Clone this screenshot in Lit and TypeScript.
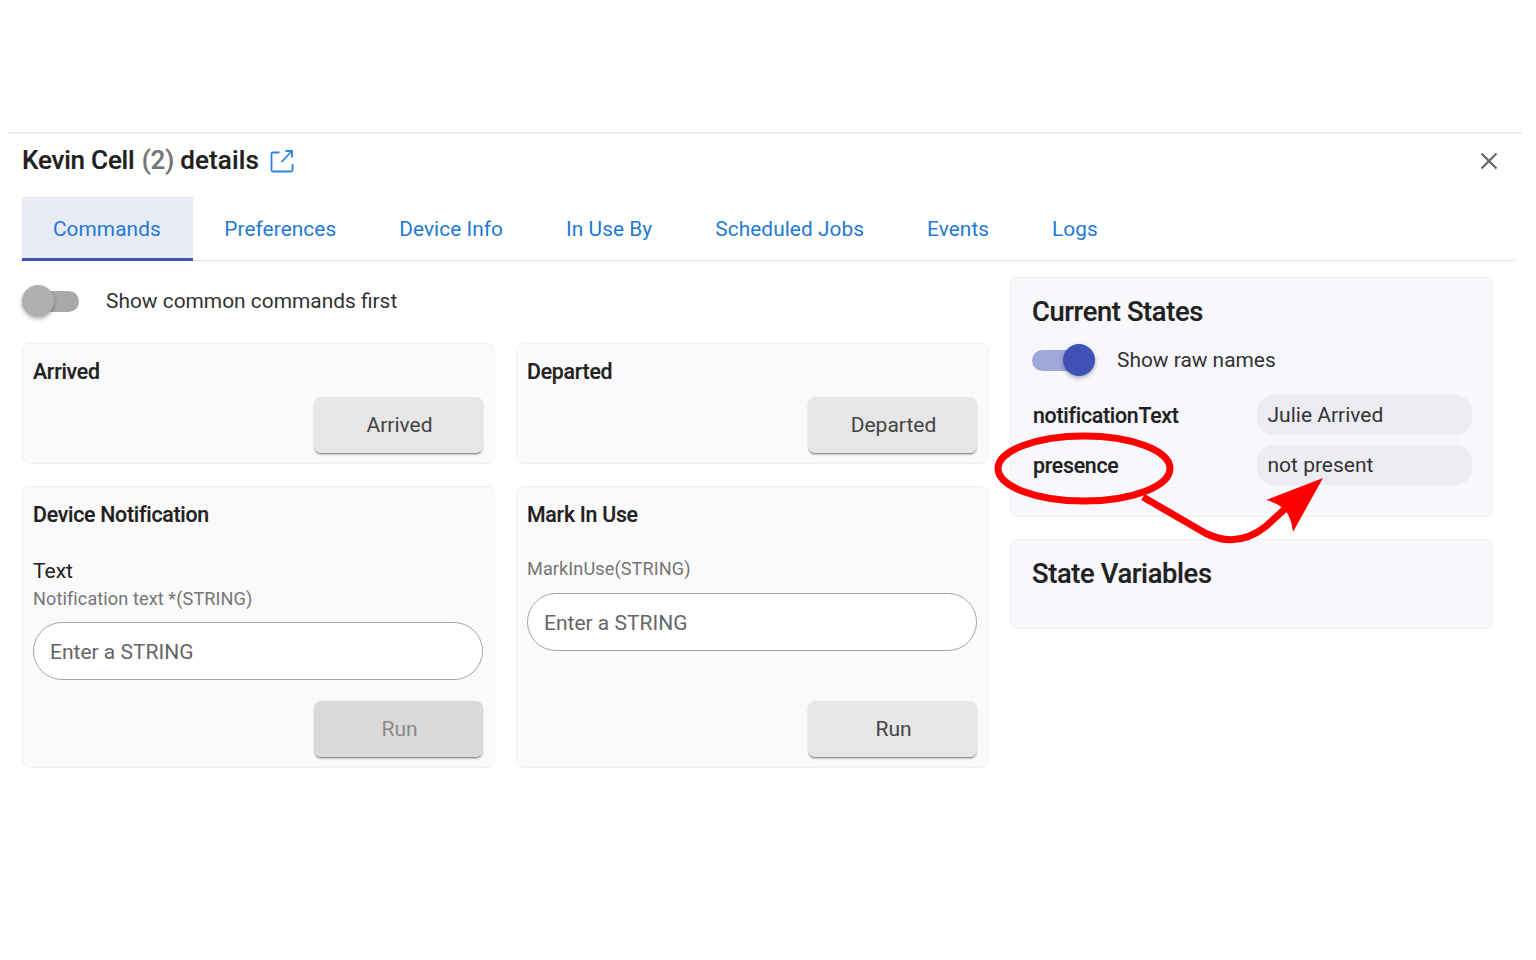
import { LitElement, html, css, svg } from "lit";
import { customElement } from "lit/decorators.js";

@customElement("app-root")
export class AppRoot extends LitElement {
  static styles = css`
    :host { display: block; position: relative; width: 1536px; height: 960px; background: #fff; overflow: hidden;
      font-family: Roboto, "Liberation Sans", sans-serif; color: #212121; }
    * { box-sizing: border-box; }
    .dialog { margin: 132px 14px 0 8px; border-top: 2px solid #ececec; padding: 0 0 0 14px; }
    .head { display: flex; align-items: center; height: 54px; padding: 0 23px 0 0; }
    .title { font-size: 26px; font-weight: 500; letter-spacing: -0.2px; line-height: 54px; -webkit-text-stroke: 0.2px #212121; transform: translateY(-1px); }
    .title .count { color: #757575; -webkit-text-stroke: 0.2px #757575; margin-left: 1px; }
    .title .rest { letter-spacing: 0.1px; }
    .ext { margin-left: 11px; display: block; }
    .close { margin-left: auto; display: block; }
    .tabs { display: flex; height: 64px; margin-top: 9px; border-bottom: 1px solid #e3e3e3; margin-right: 7px; }
    .tab { padding: 0 31.5px; font-size: 20.8px; color: #1f7ad2; display: flex; align-items: center; height: 64px; letter-spacing: 0.08px; }
    .tab.on { background: #e8eaf6; box-shadow: inset 0 -3px 0 #3f51b5; padding: 0 32px 0 31px; }
    .body { display: grid; grid-template-columns: 967px 483px; column-gap: 21px; padding-top: 16px; }
    .switch { display: flex; align-items: center; font-size: 20.9px; color: #333; height: 48px; }
    .track { width: 57px; height: 21px; border-radius: 11px; position: relative; background: #a8a8a8; margin-right: 27px; flex: none; }
    .thumb { position: absolute; width: 32px; height: 32px; border-radius: 50%; top: -5.5px; left: 0; background: #b0b0b0;
      box-shadow: 0 2px 4px rgba(0,0,0,.3); }
    .switch.on .track { width: 63px; background: #9fa8da; margin-right: 22px; }
    .switch.on .thumb { left: 31px; background: #3f51b5; }
    .cards { display: grid; grid-template-columns: 473px 473px; column-gap: 21px; row-gap: 22px; grid-template-rows: 121px 282px; margin-top: 18px; }
    .card { background: #fafafa; border: 1px solid #f1f1f1; border-radius: 8px; padding: 0 11px 0 10px; display: flex; flex-direction: column; }
    .ctitle { font-size: 21.3px; font-weight: 500; letter-spacing: -0.25px; line-height: 26px; margin-top: 15px; color: #212121; -webkit-text-stroke: 0.15px #212121; }
    .spacer { flex: 1; }
    .btn { align-self: flex-end; width: 169px; height: 56px; border-radius: 7px; background: #e6e6e6; color: #444; font-size: 21px; padding-left: 2px;
      display: flex; align-items: center; justify-content: center; box-shadow: 0 2px 1px -1px rgba(0,0,0,.3), 0 2px 2px rgba(0,0,0,.2); margin-bottom: 10px; }
    .btn.off { background: #dadada; color: #8a8a8a; }
    .lbl { font-size: 21px; line-height: 26px; color: #212121; margin-top: 30px; }
    .sub { font-size: 18.1px; line-height: 24px; color: #757575; letter-spacing: 0.1px; }
    .sub.first { margin-top: 29px; }
    .sub.second { margin-top: 3px; }
    .input { height: 58px; margin-top: 11px; border: 1px solid #a6a6a6; border-radius: 29px; background: #fff; font-size: 21px; color: #666; padding: 2px 16px 0; display: flex; align-items: center; }
    .input.alone { margin-top: 12px; }
    .panel { background: #f7f7fc; border: 1px solid #f1f1f4; border-radius: 8px; padding: 0 21px; }
    .ptitle { font-size: 27.3px; font-weight: 500; letter-spacing: -0.35px; color: #212121; -webkit-text-stroke: 0.2px #212121; line-height: 34px; }
    .states { height: 240px; padding-top: 17px; }
    .vars { height: 90px; margin-top: 22px; padding-top: 17px; }
    .rows { display: grid; grid-template-columns: 225px 215px; row-gap: 10px; margin-top: 10px; align-items: center; }
    .key { font-size: 21.3px; font-weight: 500; letter-spacing: -0.25px; -webkit-text-stroke: 0.15px #212121; padding-left: 1px; }
    .val { height: 40px; border-radius: 16px; background: #ecedf2; font-size: 21px; color: #333; padding: 0 10.5px; display: flex; align-items: center; }
    .states .switch { margin-top: 6px; height: 50px; }
    .overlay { position: absolute; left: 0; top: 0; pointer-events: none; }
  `;

  private card(title: string, content: unknown, btn: string, off = false) {
    return html`<div class="card">
      <div class="ctitle">${title}</div>
      ${content}
      <div class="spacer"></div>
      <div class="btn ${off ? "off" : ""}">${btn}</div>
    </div>`;
  }

  render() {
    const tabs = ["Preferences", "Device Info", "In Use By", "Scheduled Jobs", "Events", "Logs"];
    return html`
      <div class="dialog">
        <div class="head">
          <div class="title">Kevin Cell <span class="count">(2)</span> <span class="rest">details</span></div>
          <svg class="ext" width="24" height="24" viewBox="0 0 24 24" fill="none" stroke="#2b85d8" stroke-width="1.800">
            <path d="M9.500 3.500H3a1.500 1.500 0 0 0-1.500 1.500V21A1.500 1.500 0 0 0 3 22.500H21a1.500 1.500 0 0 0 1.500-1.500V15"/>
            <path d="M11.500 13 21.500 2.500M15.500 2H22V8.500"/>
          </svg>
          <svg class="close" width="20" height="20" viewBox="0 0 20 20" fill="none" stroke="#666" stroke-width="2.200">
            <path d="M2.500 2.500 17.500 17.500M17.500 2.500 2.500 17.500"/>
          </svg>
        </div>
        <div class="tabs">
          <div class="tab on">Commands</div>
          ${tabs.map((t) => html`<div class="tab">${t}</div>`)}
        </div>
        <div class="body">
          <div>
            <div class="switch"><div class="track"><div class="thumb"></div></div>Show common commands first</div>
            <div class="cards">
              ${this.card("Arrived", "", "Arrived")}
              ${this.card("Departed", "", "Departed")}
              ${this.card("Device Notification", html`
                <div class="lbl">Text</div>
                <div class="sub second">Notification text *(STRING)</div>
                <div class="input">Enter a STRING</div>`, "Run", true)}
              ${this.card("Mark In Use", html`
                <div class="sub first">MarkInUse(STRING)</div>
                <div class="input alone">Enter a STRING</div>`, "Run")}
            </div>
          </div>
          <div>
            <div class="panel states">
              <div class="ptitle">Current States</div>
              <div class="switch on"><div class="track"><div class="thumb"></div></div>Show raw names</div>
              <div class="rows">
                <div class="key">notificationText</div><div class="val">Julie Arrived</div>
                <div class="key">presence</div><div class="val">not present</div>
              </div>
            </div>
            <div class="panel vars"><div class="ptitle">State Variables</div></div>
          </div>
        </div>
      </div>
      <svg class="overlay" width="1536" height="960" viewBox="0 0 1536 960" fill="none">
        ${svg`
          <ellipse cx="1084" cy="468.500" rx="86" ry="32.500" stroke="#ff0000" stroke-width="7"/>
          <path d="M1143 497 L1205 533 C1227 544 1247 541 1265 527 L1286 508" stroke="#ff0000" stroke-width="7"/>
          <path d="M1323 478 L1266 500 C1274 502 1280 505 1285 510 C1290 516 1292 524 1293 532 Z" fill="#ff0000"/>
        `}
      </svg>
    `;
  }
}
